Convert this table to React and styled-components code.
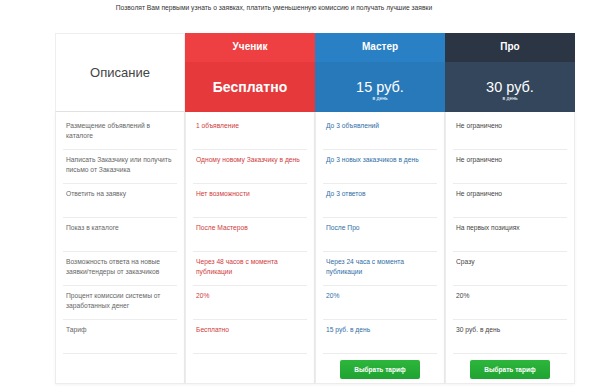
import React from "react";
import styled, { createGlobalStyle } from "styled-components";

const Global = createGlobalStyle`
  html, body { margin: 0; padding: 0; background: #fff; }
  body { font-family: "Liberation Sans", Arial, sans-serif; }
`;

const Page = styled.div`
  width: 600px;
  height: 391px;
  overflow: hidden;
  position: relative;
`;

const Intro = styled.div`
  width: 548px;
  text-align: center;
  font-size: 6.7px;
  line-height: 10px;
  color: #333;
  padding-top: 3px;
`;

const Table = styled.div`
  display: flex;
  margin: 20px 0 0 55px;
  width: 520px;
`;

const Column = styled.div`
  width: 130px;
  display: flex;
  flex-direction: column;
`;

const DescHead = styled.div`
  height: 79px;
  display: flex;
  align-items: center;
  justify-content: center;
  font-size: 13px;
  color: #444;
  border: 1px solid #eee;
  border-bottom: 1px solid #e3e3e3;
  box-sizing: border-box;
  background: #fff;
`;

const NameBand = styled.div`
  height: 29px;
  display: flex;
  align-items: center;
  justify-content: center;
  color: #fff;
  font-weight: 700;
  font-size: 10px;
  padding-bottom: 2px;
  box-sizing: border-box;
  background: ${(p) => p.$bg};
`;

const PriceBand = styled.div`
  height: 50px;
  display: flex;
  flex-direction: column;
  align-items: center;
  justify-content: center;
  color: #fff;
  background: ${(p) => p.$bg};
`;

const Price = styled.div`
  font-size: ${(p) => (p.$bold ? "14px" : "14.5px")};
  font-weight: ${(p) => (p.$bold ? 700 : 400)};
  line-height: 16px;
  margin-top: ${(p) => (p.$bold ? "0" : "6px")};
`;

const PerDay = styled.div`
  font-size: 5px;
  line-height: 6px;
`;

const Body = styled.div`
  border: 1px solid #ececec;
  border-top: none;
  padding: 4px 7px 0;
  height: 272px;
  box-sizing: border-box;
  box-shadow: 0 1px 3px rgba(0, 0, 0, 0.05);
  background: #fff;
`;

const Row = styled.div`
  height: 34px;
  box-sizing: border-box;
  padding: 5px 3px 0;
  border-bottom: 1px solid #ececec;
  font-size: 6.7px;
  line-height: 10px;
  color: ${(p) => p.$color};
`;

const ButtonWrap = styled.div`
  display: flex;
  justify-content: center;
  padding-top: 6px;
`;

const Button = styled.button`
  width: 80px;
  height: 19px;
  border: none;
  border-radius: 2px;
  background: linear-gradient(#2db63c, #20a332);
  color: #fff;
  font-family: inherit;
  font-weight: 700;
  font-size: 6.5px;
  padding: 0;
  cursor: pointer;
`;

const labels = [
  "Размещение объявлений в каталоге",
  "Написать Заказчику или получить письмо от Заказчика",
  "Ответить на заявку",
  "Показ в каталоге",
  "Возможность ответа на новые заявки/тендеры от заказчиков",
  "Процент комиссии системы от заработанных денег",
  "Тариф",
];

const plans = [
  {
    name: "Ученик",
    nameBg: "#ee3f43",
    priceBg: "#e6393c",
    price: "Бесплатно",
    bold: true,
    color: "#cf3b3b",
    button: false,
    values: [
      "1 объявление",
      "Одному новому Заказчику в день",
      "Нет возможности",
      "После Мастеров",
      "Через 48 часов с момента публикации",
      "20%",
      "Бесплатно",
    ],
  },
  {
    name: "Мастер",
    nameBg: "#2a80c4",
    priceBg: "#2879b9",
    price: "15 руб.",
    color: "#2f6ea6",
    button: true,
    values: [
      "До 3 объявлений",
      "До 3 новых заказчиков в день",
      "До 3 ответов",
      "После Про",
      "Через 24 часа с момента публикации",
      "20%",
      "15 руб. в день",
    ],
  },
  {
    name: "Про",
    nameBg: "#2b3544",
    priceBg: "#33465c",
    price: "30 руб.",
    color: "#444",
    button: true,
    values: [
      "Не ограничено",
      "Не ограничено",
      "Не ограничено",
      "На первых позициях",
      "Сразу",
      "20%",
      "30 руб. в день",
    ],
  },
];

export default function App() {
  return (
    <Page>
      <Global />
      <Intro>
        Позволят Вам первыми узнать о заявках, платить уменьшенную комиссию и
        получать лучшие заявки
      </Intro>
      <Table>
        <Column>
          <DescHead>Описание</DescHead>
          <Body>
            {labels.map((l) => (
              <Row key={l} $color="#666">
                {l}
              </Row>
            ))}
          </Body>
        </Column>
        {plans.map((p) => (
          <Column key={p.name}>
            <NameBand $bg={p.nameBg}>{p.name}</NameBand>
            <PriceBand $bg={p.priceBg}>
              <Price $bold={p.bold}>{p.price}</Price>
              {!p.bold && <PerDay>в день</PerDay>}
            </PriceBand>
            <Body>
              {p.values.map((v, i) => (
                <Row key={i} $color={p.color}>
                  {v}
                </Row>
              ))}
              {p.button && (
                <ButtonWrap>
                  <Button>Выбрать тариф</Button>
                </ButtonWrap>
              )}
            </Body>
          </Column>
        ))}
      </Table>
    </Page>
  );
}
